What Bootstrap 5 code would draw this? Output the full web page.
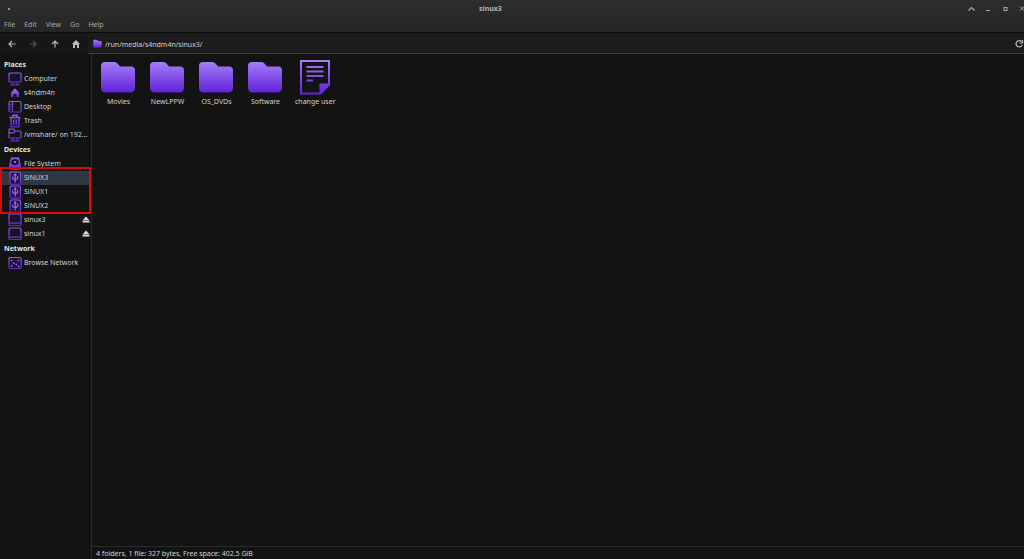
<!DOCTYPE html>
<html lang="en">
<head>
<meta charset="utf-8">
<meta name="viewport" content="width=device-width, initial-scale=1">
<title>sinux3</title>
<link href="https://cdn.jsdelivr.net/npm/bootstrap@5.3.0/dist/css/bootstrap.min.css" rel="stylesheet">
<style>
  body { font: 7px/14px "Noto Sans", "Open Sans", sans-serif; background: #131313; color: #d2d2d2; }
  a, a:hover { color: inherit; text-decoration: none; }
  svg { display: block; flex: none; }
  button { border: 0; padding: 0; background: none; color: inherit; }
  .chrome { background: linear-gradient(#2d2d2d, #252525); border-bottom: 1px solid #0c0c0c; }
  .titlebar { height: 17px; color: #b4b4b4; }
  .titlebar h1 { font-size: 7px; line-height: 14px; padding-left: 4px; }
  .win-btns { gap: 7px; margin-right: -4px; }
  .menubar { height: 15px; gap: 9px; padding-left: 4px; color: #a8a8a8; }
  .toolbar { height: 21px; background: #161616; }
  .nav-btns { width: 88px; padding: 0 7px; color: #b9b9b9; }
  .location { background: #1c1c1c; border-bottom: 1px solid #414141; padding: 1px 0 0 5px; gap: 3px; }
  .location input { background: none; border: 0; outline: 0; padding: 1px 0 0; color: #d2d2d2; height: 16px; }
  .side { width: 92px; padding-top: 3px; border-right: 1px solid #2a2a2a; }
  .side h2 { font-size: 7px; font-weight: 700; line-height: 15px; margin: 0; padding-left: 4px; color: #e4e4e4; }
  .place { height: 14px; padding: 0 1px 0 8px; gap: 2px; }
  .place.current { background: #303744; }
  .marked::after { content: ""; position: absolute; inset: -4px 0 -1px 0; border: 2px solid #d90a0a; pointer-events: none; }
  .files { padding: 4px 2px; }
  .file { min-width: 49px; padding: 0 5px; text-align: center; line-height: 10px; gap: 1px; }
  .status { height: 13px; border-top: 1px solid #2a2a2a; padding: 1px 4px 0; line-height: 12px; }
</style>
</head>
<body>
<svg width="0" height="0" class="position-absolute" aria-hidden="true">
  <defs>
    <linearGradient id="violet" x1="0" y1="0" x2="0" y2="1"><stop offset="0" stop-color="#a67df9"/><stop offset="1" stop-color="#5f22d8"/></linearGradient>
    <linearGradient id="line" gradientUnits="userSpaceOnUse" x1="0" y1="0" x2="0" y2="14"><stop offset="0" stop-color="#9266ea"/><stop offset="1" stop-color="#5923bb"/></linearGradient>
    <symbol id="folder" viewBox="0 0 36 36"><path d="M5 3H14Q16 3 17 4L20 7.500H31Q35 7.500 35 11.500V28.500Q35 33.500 30 33.500H6Q1 33.500 1 28.500V7Q1 3 5 3Z" fill="url(#violet)"/></symbol>
    <symbol id="usb" viewBox="0 0 14 14"><rect x="2" y="1" width="10.500" height="12.300" rx="1.500" fill="#23163e" stroke="url(#line)" stroke-width="1.200"/><path d="M7.200 3V11.500M4.700 5.500V7.500L7.200 9L9.700 7.500V5M6 4.300L7.200 3L8.400 4.300" fill="none" stroke="#9b6af6" stroke-width="1.200"/></symbol>
    <symbol id="drive" viewBox="0 0 14 14"><path d="M1 2.500Q1 1 2.500 1H11.500Q13 1 13 2.500V11.500Q13 12.500 12 12.500H2Q1 12.500 1 11.500ZM1 10.200H13" fill="#1a1128" stroke="url(#line)" stroke-width="1.200"/></symbol>
    <symbol id="eject" viewBox="0 0 8 8"><path d="M4 .5L7.500 4.500H.5ZM.5 5H7.500V6.500H.5Z" fill="#dedede"/></symbol>
  </defs>
</svg>

<div class="d-flex flex-column vh-100 overflow-hidden">
  <header class="chrome">
    <div class="titlebar d-flex align-items-center">
      <svg class="ms-2" width="2" height="2"><rect width="2" height="2" fill="#999"/></svg>
      <h1 class="flex-fill text-center fw-bold m-0">sinux3</h1>
      <div class="win-btns d-flex">
        <button aria-label="Roll up"><svg width="10" height="10"><path d="M1.500 6.500L4.500 3.500L7.500 6.500" fill="none" stroke="#aaa" stroke-width="1.200"/></svg></button>
        <button aria-label="Minimize"><svg width="10" height="10"><path d="M2 6.500H6" stroke="#aaa"/></svg></button>
        <button aria-label="Maximize"><svg width="10" height="10"><rect x="3" y="3.500" width="3" height="3" fill="none" stroke="#aaa"/></svg></button>
        <button aria-label="Close"><svg width="10" height="10"><path d="M2 2.500L6 6.500M6 2.500L2 6.500" stroke="#aaa"/></svg></button>
      </div>
    </div>
    <nav class="menubar d-flex align-items-center" aria-label="Menu">
      <a href="#">File</a><a href="#">Edit</a><a href="#">View</a><a href="#">Go</a><a href="#">Help</a>
    </nav>
  </header>

  <div class="toolbar d-flex">
    <div class="nav-btns d-flex align-items-center justify-content-between">
      <button aria-label="Back"><svg width="10" height="10"><path d="M8.500 5H2M5 2L2 5L5 8" fill="none" stroke="currentColor" stroke-width="1.200"/></svg></button>
      <button aria-label="Forward" disabled><svg width="10" height="10"><path d="M1.500 5H8M5 2L8 5L5 8" fill="none" stroke="#555" stroke-width="1.200"/></svg></button>
      <button aria-label="Up"><svg width="10" height="10"><path d="M5 8.500V2M2 5L5 2L8 5" fill="none" stroke="currentColor" stroke-width="1.200"/></svg></button>
      <button aria-label="Home"><svg width="10" height="10"><path d="M5 1L9 5H8V9H6V6H4V9H2V5H1Z" fill="currentColor"/></svg></button>
    </div>
    <div class="location d-flex align-items-center flex-fill">
      <svg width="9" height="9"><use href="#folder"/></svg>
      <input class="flex-fill" type="text" value="/run/media/s4ndm4n/sinux3/" aria-label="Location">
      <button aria-label="Reload"><svg width="10" height="10"><path d="M7.500 2.500A3.200 3.200 0 1 0 8.200 6M8.500 1V4H5.500" fill="none" stroke="#bbb" stroke-width="1.200"/></svg></button>
    </div>
  </div>

  <div class="d-flex flex-fill">
    <aside class="side flex-shrink-0">
      <h2>Places</h2>
      <a class="place d-flex align-items-center" href="#"><svg width="14" height="14"><rect x="1" y="1" width="12" height="9" rx="1" fill="#1a1128" stroke="url(#line)" stroke-width="1.200"/><path d="M5 10.500V12.500M9 10.500V12.500M2 12.800H12" fill="none" stroke="url(#line)" stroke-width="1.300"/></svg>Computer</a>
      <a class="place d-flex align-items-center" href="#"><svg width="14" height="14"><path d="M7 2.500L11 6.500V11H8.500V8H5.500V11H3V6.500Z" fill="url(#violet)"/></svg>s4ndm4n</a>
      <a class="place d-flex align-items-center" href="#"><svg width="14" height="14"><path d="M1 3Q1 1.500 2.500 1.500H11.500Q13 1.500 13 3V11Q13 12 12 12H2Q1 12 1 11ZM4.500 2V12M2 4.500H3.200M2 7H3.200M2 9.500H3.200" fill="none" stroke="url(#line)" stroke-width="1.200"/></svg>Desktop</a>
      <a class="place d-flex align-items-center" href="#"><svg width="14" height="14"><path d="M1.500 3.500H12.500M5 3V1.300H9V3M3 4V12.700H11V4M5.700 5.500V11M8.300 5.500V11" fill="none" stroke="url(#line)" stroke-width="1.500"/></svg>Trash</a>
      <a class="place d-flex align-items-center" href="#"><svg width="14" height="14"><path d="M1 10V2Q1 1 2 1H5.500L7 3H12Q13 3 13 4V10H1M1 4.800H6L7 3M5 10V12.500M9 10V12.500M2 12.900H12" fill="none" stroke="url(#line)" stroke-width="1.200"/></svg>/vmshare/ on 192...</a>
      <h2>Devices</h2>
      <a class="place d-flex align-items-center" href="#"><svg width="14" height="14"><path d="M3 .5H11L13 8.500V12Q13 13 12 13H2Q1 13 1 12V8.500Z" fill="url(#line)"/><ellipse cx="7" cy="5" rx="3.800" ry="3" fill="#1b0d36"/><ellipse cx="7" cy="5" rx="1.300" ry="1" fill="#a67df9"/><path d="M2.500 10.500H11.500" stroke="#1b0d36"/></svg>File System</a>
      <div class="marked position-relative">
        <a class="place current d-flex align-items-center" href="#" aria-current="true"><svg width="14" height="14"><use href="#usb"/></svg>SiNUX3</a>
        <a class="place d-flex align-items-center" href="#"><svg width="14" height="14"><use href="#usb"/></svg>SiNUX1</a>
        <a class="place d-flex align-items-center" href="#"><svg width="14" height="14"><use href="#usb"/></svg>SiNUX2</a>
      </div>
      <div class="place d-flex align-items-center"><svg width="14" height="14"><use href="#drive"/></svg><a class="flex-fill" href="#">sinux3</a><button aria-label="Eject sinux3"><svg width="8" height="8"><use href="#eject"/></svg></button></div>
      <div class="place d-flex align-items-center"><svg width="14" height="14"><use href="#drive"/></svg><a class="flex-fill" href="#">sinux1</a><button aria-label="Eject sinux1"><svg width="8" height="8"><use href="#eject"/></svg></button></div>
      <h2>Network</h2>
      <a class="place d-flex align-items-center" href="#"><svg width="14" height="14"><rect x="1" y="1.500" width="12" height="11" rx="1" fill="#1d1133" stroke="url(#line)" stroke-width="1.200"/><path d="M3 9.500L5.500 7L8 8.500L11 4.500M3 4.500L5.500 7M8 8.500L10.500 10.500" fill="none" stroke="#5a35a0" stroke-width=".6"/><path d="M3 4.300H4.500M9.500 4.300H11M5 7H6.500M3 10H4.500M7.500 8.500H9M10 10.500H11.500" stroke="#9a6cf0" stroke-width="1.300"/></svg>Browse Network</a>
    </aside>

    <div class="d-flex flex-column flex-fill">
      <main class="files d-flex flex-wrap align-content-start flex-fill">
        <a class="file d-flex flex-column align-items-center" href="#"><svg width="37" height="38"><use href="#folder" y="1" width="36" height="36"/></svg><span>Movies</span></a>
        <a class="file d-flex flex-column align-items-center" href="#"><svg width="37" height="38"><use href="#folder" y="1" width="36" height="36"/></svg><span>NewLPPW</span></a>
        <a class="file d-flex flex-column align-items-center" href="#"><svg width="37" height="38"><use href="#folder" y="1" width="36" height="36"/></svg><span>OS_DVDs</span></a>
        <a class="file d-flex flex-column align-items-center" href="#"><svg width="37" height="38"><use href="#folder" y="1" width="36" height="36"/></svg><span>Software</span></a>
        <a class="file d-flex flex-column align-items-center" href="#"><svg width="36" height="38"><path fill="url(#violet)" fill-rule="evenodd" d="M3 2H33V27L24 36.500H3ZM5 4V34.500H22.500V25.500H31V4ZM9.500 8H26.500V10H9.500ZM9.500 12.500H26.500V14.500H9.500ZM9.500 17H26.500V19H9.500ZM9.500 21.500H16V23.500H9.500Z"/></svg><span>change user</span></a>
      </main>
      <footer class="status">4 folders, 1 file: 327 bytes, Free space: 402.5 GiB</footer>
    </div>
  </div>
</div>
<script src="https://cdn.jsdelivr.net/npm/bootstrap@5.3.0/dist/js/bootstrap.bundle.min.js"></script>
</body>
</html>
